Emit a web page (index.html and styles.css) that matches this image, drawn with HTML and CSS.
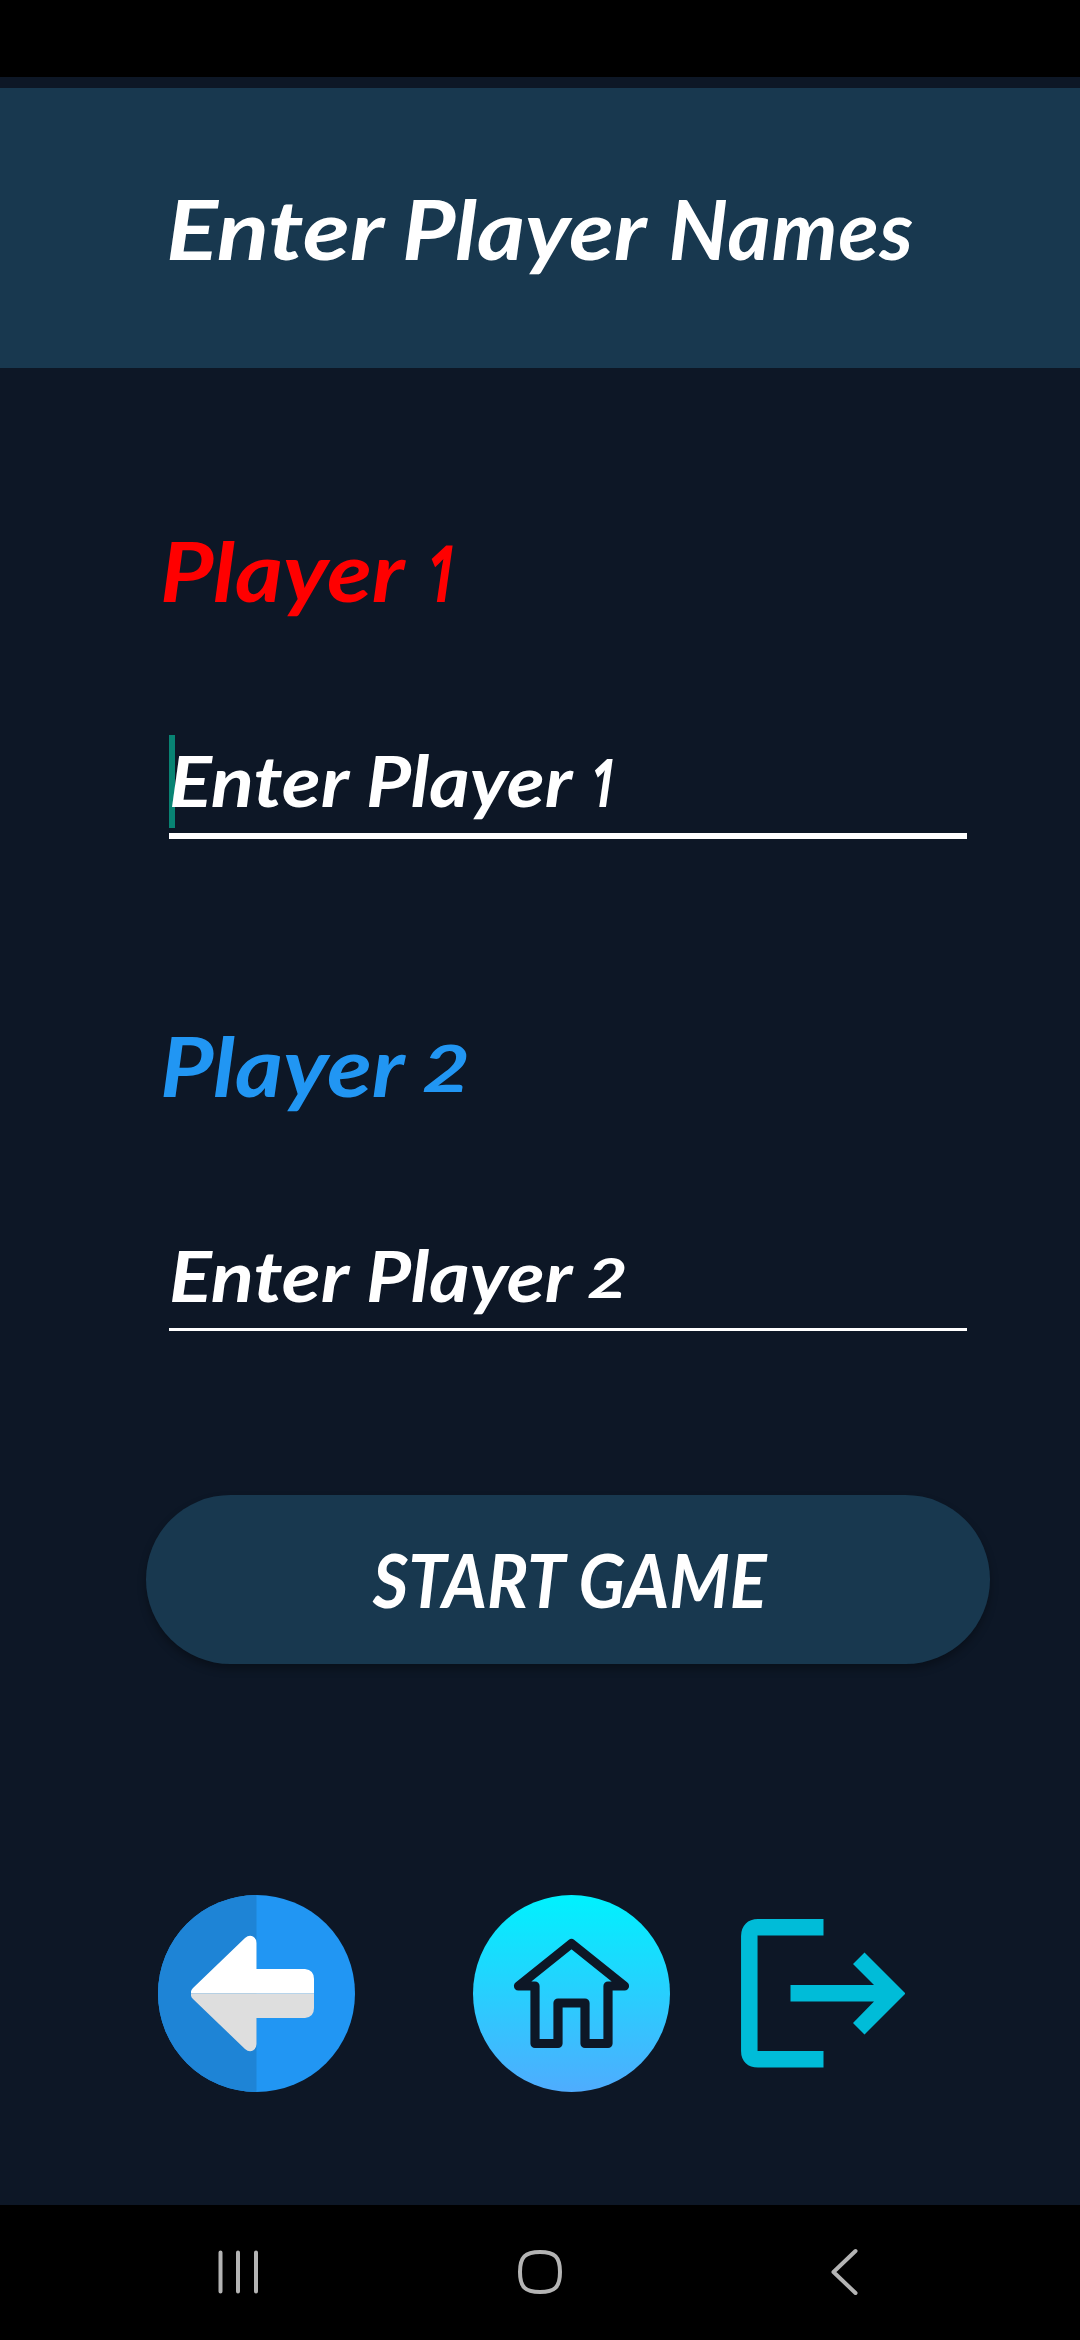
FILE: index.html
```html
<!DOCTYPE html>
<html lang="en">
<head>
<meta charset="utf-8">
<title>Enter Player Names</title>
<link rel="stylesheet" href="styles.css">
</head>
<body>
<div class="screen">
  <div class="status-bar"></div>
  <header class="header"><h1 class="title"><span class="enter">Enter</span> <span class="player">Player</span> <span class="names">Names</span></h1></header>
  <main class="form">
    <div class="label label-red"><span class="player">Player</span> <span class="one">1</span></div>
    <div class="field field-focused"><span class="caret"></span><span class="hint"><span class="enter">Enter</span> <span class="player">Player</span></span> <span class="hint one">1</span></div>
    <div class="label label-blue"><span class="player">Player</span> <span class="two">2</span></div>
    <div class="field"><span class="hint"><span class="enter">Enter</span> <span class="player">Player</span></span> <span class="hint two">2</span></div>
    <button class="start" type="button"><span class="start-text">START GAME</span></button>
  </main>
  <div class="actions">
    <svg class="circle-icon" viewBox="0 0 197 197">
      <circle cx="98.5" cy="98.5" r="98.5" fill="#2196f3"/>
      <path d="M98.5 0a98.5 98.5 0 0 0 0 197z" fill="#1e84d6"/>
      <path d="M33 98.500V96.500Q33 95 35 93L87 43Q91 39.500 95 41.500Q98.500 43.500 98.500 48V74H147Q156 75 156 84V98.500z" fill="#fff"/>
      <path d="M33 98.500V100.500Q33 102 35 104L87 154Q91 157.500 95 155.500Q98.500 153.500 98.500 149V123H147Q156 122 156 113V98.500z" fill="#dedede"/>
    </svg>
    <svg class="circle-icon home" viewBox="0 0 197 197">
      <defs><linearGradient id="sky" x1="0" y1="0" x2="0" y2="1"><stop offset="0" stop-color="#00f2fe"/><stop offset=".04" stop-color="#03effe"/><stop offset="1" stop-color="#4facfe"/></linearGradient></defs>
      <circle cx="98.500" cy="98.500" r="98.500" fill="url(#sky)"/>
      <path d="M98.500 48.500L45.500 91H62V148.500H85V108H112V148.500H135V91H151.500z" fill="none" stroke="#0d1726" stroke-width="9.200" stroke-linejoin="round"/>
    </svg>
    <svg class="exit-icon" viewBox="0 0 164 149">
      <path d="M82.500 8.300H17Q8.300 8.300 8.300 17V132Q8.300 140.300 17 140.300H82.500" fill="none" stroke="#00bcd8" stroke-width="16.500"/>
      <path d="M49.500 66H133L112 45L123.500 33.500L164.500 74.500L123.500 115.500L112 104L133 82.500H49.500z" fill="#00bcd8"/>
    </svg>
  </div>
  <nav class="nav-bar">
    <svg class="nav-icon" viewBox="0 0 48 48"><path d="M8.500 4.500V43.500M26 4.500V43.500M44 4.500V43.500" /></svg>
    <svg class="nav-icon" viewBox="0 0 48 48"><path d="M24 4C39 4 44 9 44 24S39 44 24 44S4 39 4 24S9 4 24 4z"/></svg>
    <svg class="nav-icon" viewBox="0 0 48 48"><path d="M35.500 3L13.500 24L35.500 45"/></svg>
  </nav>
</div>
</body>
</html>
```
FILE: styles.css
```css
* { box-sizing: border-box; }
body { margin: 0; background: #0d1726; font-family: Lato, "Open Sans", sans-serif; font-style: italic; font-weight: 700; color: #fff; }
.screen { width: 1080px; height: 2340px; display: flex; flex-direction: column; }
.status-bar { height: 77px; background: #000; }
.header { height: 280px; margin-top: 11px; background: #18384f; display: flex; align-items: center; justify-content: center; }
.title { margin: 0; font-size: 83px; line-height: 100px; white-space: nowrap; }
.enter, .player { display: inline-block; transform-origin: left; }
.enter { transform: scaleX(1.165); margin-right: .37em; }
.field .enter { transform: scaleX(1.14); margin-right: .34em; }
.player { transform: scaleX(1.11); margin-right: .29em; }
.names { margin-left: 4px; letter-spacing: .01em; }
.form { height: 1527px; padding: 152px 90px 0 146px; display: flex; flex-direction: column; }
.label { height: 100px; padding-left: 14px; font-size: 83px; line-height: 100px; display: flex; align-items: baseline; }
.label-red { color: #f00; }
.label-blue { color: #2196f3; margin-top: 176px; }
.field { position: relative; height: 101px; margin: 115px 23px 0; border-bottom: 3px solid #fff; font-size: 70px; line-height: 91px; display: flex; align-items: baseline; white-space: nowrap; }
.field-focused { height: 104px; border-bottom-width: 6px; }
.caret { position: absolute; left: 0; top: 0; width: 6px; height: 93px; background: #088373; }
.hint { position: relative; }
.one { margin-left: .28em; font-family: "Open Sans", sans-serif; font-size: .96em; font-weight: 700; line-height: 1; transform: scaleX(.66); transform-origin: left; }
.two { margin-left: .28em; font-size: .78em; line-height: 1; transform: translateY(-.08em) scaleX(1.28); transform-origin: left; }
.start { height: 169px; margin: 164px 0 0; padding: 0; border: 0; border-radius: 85px; background: #18384f; color: #fff; font: inherit; font-size: 74px; box-shadow: 0 5px 8px rgba(0, 0, 0, .3); }
.start-text { display: inline-block; transform: scaleX(.93); margin-left: 4px; }
.actions { height: 197px; padding-left: 158px; display: flex; align-items: center; }
.circle-icon { width: 197px; height: 197px; }
.home { margin-left: 118px; }
.exit-icon { width: 164px; height: 149px; margin-left: 71px; }
.nav-bar { height: 135px; margin-top: auto; padding: 0 212px 1px; background: #000; display: flex; align-items: center; justify-content: space-between; }
.nav-icon { width: 48px; height: 48px; fill: none; stroke: #b4b4b4; stroke-width: 4; stroke-linecap: round; stroke-linejoin: round; }
```
